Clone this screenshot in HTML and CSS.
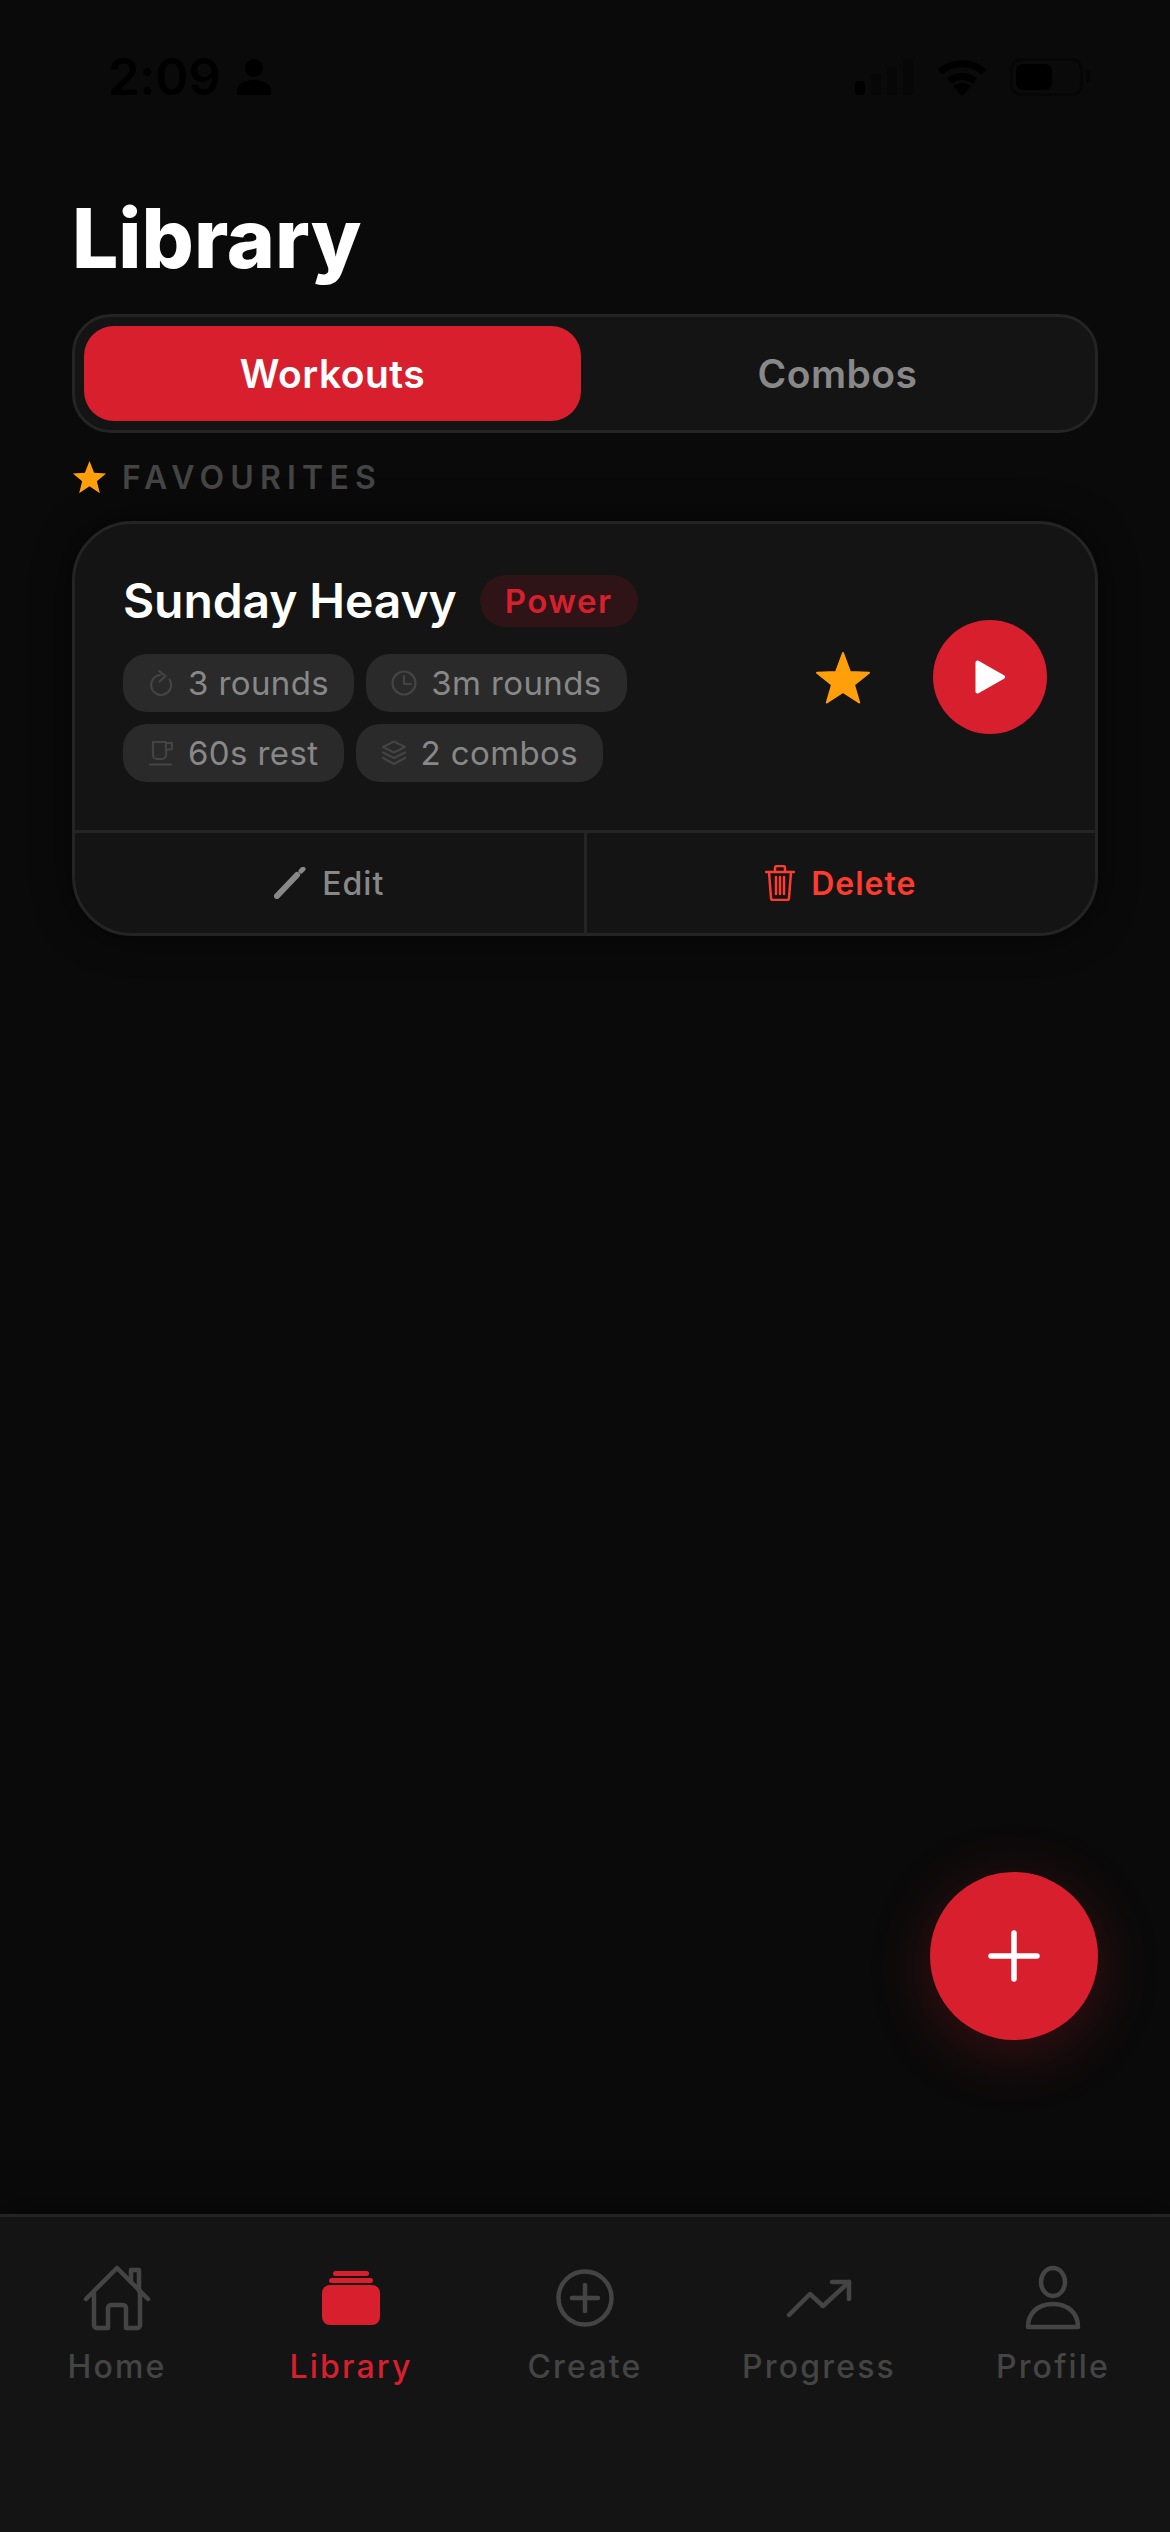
FILE: index.html
```html
<!DOCTYPE html>
<html lang="en">
<head>
  <meta charset="UTF-8" />
  <meta name="viewport" content="width=device-width, initial-scale=1.0"/>
  <title>Library</title>
  <link rel="stylesheet" href="styles.css">
</head>
<body>
  <div class="screen">
    <div class="status">
      <div class="status-left">
        <span class="time">2:09</span>
        <svg class="person" viewBox="0 0 34 36"><circle cx="17" cy="9" r="9"/><path d="M0 36v-5c0-6 8-10 17-10s17 4 17 10v5z"/></svg>
      </div>
      <div class="status-right">
        <svg class="signal" viewBox="0 0 60 36">
          <rect x="0" y="22" width="10" height="14" rx="3"/>
          <rect class="dim" x="16" y="15" width="10" height="21" rx="3"/>
          <rect class="dim" x="32" y="8" width="10" height="28" rx="3"/>
          <rect class="dim" x="48" y="0" width="10" height="36" rx="3"/>
        </svg>
        <svg class="wifi" viewBox="0 0 50 37">
          <path d="M3 13C15 2 35 2 47 13"/>
          <path d="M12 22c8-6 18-6 26 0"/>
          <path class="wifi-dot" d="M25 37l-9-10c5-4 13-4 18 0z"/>
        </svg>
        <div class="battery"><div class="battery-fill"></div></div>
      </div>
    </div>

    <main class="content">
      <h1 class="page-title">Library</h1>

      <div class="segment">
        <div class="segment-btn active">Workouts</div>
        <div class="segment-btn">Combos</div>
      </div>

      <div class="section-label">
        <svg class="label-star" viewBox="1 2 32 30"><path d="M17 2l4.200 10.600 11 .7-8.500 7.100 2.800 10.900L17 25l-9.500 6.300 2.800-10.900-8.500-7.100 11-.7z"/></svg>
        <span>FAVOURITES</span>
      </div>

      <section class="card">
        <div class="card-body">
          <div class="card-info">
            <div class="card-head">
              <span class="card-title">Sunday Heavy</span>
              <span class="tag">Power</span>
            </div>
            <div class="chips">
              <div class="chip">
                <svg class="chip-icon" viewBox="0 0 24 26"><path d="M11 5A10 10 0 1 0 20.500 9.500"/><path d="M10 1l6.500 5-6 5.500"/></svg>
                <span>3 rounds</span>
              </div>
              <div class="chip">
                <svg class="chip-icon" viewBox="0 0 26 26"><circle cx="13" cy="13" r="11.500"/><path d="M13 6v8h7"/></svg>
                <span>3m rounds</span>
              </div>
              <div class="chip">
                <svg class="chip-icon" viewBox="0 0 24 26"><path d="M4 2h13v13a4 4 0 0 1-4 4H8a4 4 0 0 1-4-4z"/><path d="M17 3h6v6l-6 1"/><path d="M1 24.500h21"/></svg>
                <span>60s rest</span>
              </div>
              <div class="chip">
                <svg class="chip-icon" viewBox="0 0 26 26"><path d="M13 1.500L24 7l-11 5.500L2 7z"/><path d="M2 12.500L13 18l11-5.500"/><path d="M2 18l11 6 11-6"/></svg>
                <span>2 combos</span>
              </div>
            </div>
          </div>
          <svg class="fav-star" viewBox="0 0 58 54"><path d="M29 3l7 19 19 .8-15 12 5.200 17.700L29 42l-16.200 10.500L18 34.800l-15-12 19-.8z"/></svg>
          <div class="play-btn">
            <svg viewBox="0 0 30 34"><path d="M2.500 2.500L28 17 2.500 31.500z"/></svg>
          </div>
        </div>
        <div class="card-actions">
          <div class="action edit">
            <svg class="pencil" viewBox="0 0 32 32"><path class="pencil-shaft" d="M3 29L23 8"/><path class="pencil-tip" d="M27 4l2-2"/></svg>
            <span>Edit</span>
          </div>
          <div class="action delete">
            <svg class="trash" viewBox="0 0 30 36"><path d="M1 7h28"/><path d="M10 6V3a2 2 0 0 1 2-2h6a2 2 0 0 1 2 2v3"/><path d="M4 7l2 26a2 2 0 0 0 2 2h14a2 2 0 0 0 2-2l2-26"/><path d="M11 12v17M15 12v17M19 12v17"/></svg>
            <span>Delete</span>
          </div>
        </div>
      </section>
    </main>

    <div class="fab">
      <svg viewBox="0 0 52 52"><path d="M26 3v46M3 26h46"/></svg>
    </div>

    <nav class="tabbar">
      <div class="tab">
        <div class="tab-icon">
          <svg class="stroke-icon" width="68" height="66" viewBox="0 0 68 66">
            <path d="M3 34L34 3l31 31"/>
            <path d="M48 17V5h8v21"/>
            <path d="M11 28v32a3 3 0 0 0 3 3h11V43a3 3 0 0 1 3-3h12a3 3 0 0 1 3 3v20h11a3 3 0 0 0 3-3V28"/>
          </svg>
        </div>
        <span>Home</span>
      </div>
      <div class="tab active">
        <div class="tab-icon">
          <svg class="fill-icon" width="60" height="54" viewBox="0 0 60 54">
            <rect x="12" y="0" width="36" height="5" rx="2.500"/>
            <rect x="8" y="7" width="44" height="5" rx="2.500"/>
            <rect x="1" y="14" width="58" height="40" rx="8"/>
          </svg>
        </div>
        <span>Library</span>
      </div>
      <div class="tab">
        <div class="tab-icon">
          <svg class="stroke-icon" width="60" height="60" viewBox="0 0 60 60">
            <circle cx="30" cy="30" r="26.500"/>
            <path d="M30 17v26M17 30h26"/>
          </svg>
        </div>
        <span>Create</span>
      </div>
      <div class="tab">
        <div class="tab-icon">
          <svg class="stroke-icon" width="66" height="40" viewBox="0 0 66 40">
            <path d="M3 37l21-21 13 12L63 4"/>
            <path d="M46 4h17v17"/>
          </svg>
        </div>
        <span>Progress</span>
      </div>
      <div class="tab">
        <div class="tab-icon">
          <svg class="stroke-icon" width="60" height="66" viewBox="0 0 60 66">
            <ellipse cx="30" cy="17" rx="12" ry="14"/>
            <path d="M5 62c0-14 10-23 25-23s25 9 25 23z"/>
          </svg>
        </div>
        <span>Profile</span>
      </div>
    </nav>
  </div>
</body>
</html>
```
FILE: styles.css
```css
* {
  box-sizing: border-box;
}

body {
  margin: 0;
  background: #0a0a0a;
  font-family: 'Inter', 'Liberation Sans', sans-serif;
}

.screen {
  position: relative;
  display: flex;
  flex-direction: column;
  width: 1170px;
  height: 2532px;
  overflow: hidden;
}

/* status bar, black on almost black */
.status {
  display: flex;
  justify-content: space-between;
  align-items: center;
  height: 96px;
  padding: 58px 87px 0 108px;
  flex-shrink: 0;
}

.status-left,
.status-right {
  display: flex;
  align-items: center;
}

.time {
  font-size: 51px;
  font-weight: 600;
  line-height: 38px;
  letter-spacing: -0.500px;
  color: #000;
}

.person {
  width: 34px;
  height: 36px;
  margin-left: 17px;
  fill: #000;
}

.signal {
  width: 60px;
  height: 36px;
  fill: #000;
}

.signal .dim {
  fill: #070707;
}

.wifi {
  width: 50px;
  height: 37px;
  margin-left: 22px;
  fill: none;
  stroke: #000;
  stroke-width: 7px;
}

.wifi .wifi-dot {
  fill: #000;
  stroke: none;
}

.battery {
  position: relative;
  width: 73px;
  height: 38px;
  margin-left: 23px;
  padding: 3px;
  border: 3px solid #060606;
  border-radius: 11px;
}

/* battery terminal */
.battery::after {
  content: "";
  position: absolute;
  top: 8px;
  right: -10px;
  width: 4px;
  height: 14px;
  background: #060606;
  border-radius: 0 4px 4px 0;
}

.battery-fill {
  width: 36px;
  height: 100%;
  background: #000;
  border-radius: 7px;
}

.content {
  padding: 0 72px;
}

.page-title {
  margin: 93px 0 25px;
  font-size: 82px;
  font-weight: 800;
  line-height: 100px;
  color: #fff;
}

.segment {
  display: flex;
  gap: 8px;
  height: 119px;
  padding: 9px;
  background: #141414;
  border: 3px solid #242424;
  border-radius: 39px;
}

.segment-btn {
  flex: 1;
  display: flex;
  align-items: center;
  justify-content: center;
  font-size: 39px;
  font-weight: 600;
  letter-spacing: 0.500px;
  color: #888;
  border-radius: 30px;
}

.segment-btn.active {
  background: #d81f2e;
  color: #fff;
}

.section-label {
  display: flex;
  align-items: center;
  gap: 15px;
  height: 36px;
  margin: 26px 0 26px;
  font-size: 32px;
  font-weight: 600;
  letter-spacing: 6.200px;
  color: #444;
}

.label-star {
  width: 35px;
  height: 33px;
  fill: #ff9f0a;
}

.card {
  display: flex;
  flex-direction: column;
  height: 415px;
  background: #141414;
  border: 3px solid #242424;
  border-radius: 60px;
  box-shadow: 0 0 36px rgba(0, 0, 0, 0.6);
}

.card-body {
  display: flex;
  align-items: center;
  height: 309px;
  padding: 0 48px;
  border-bottom: 3px solid #242424;
}

.card-info {
  flex: 1;
  padding-top: 3px;
}

.card-head {
  display: flex;
  align-items: center;
  gap: 23px;
  margin-bottom: 27px;
}

.card-title {
  font-size: 48px;
  font-weight: 600;
  line-height: 52px;
  letter-spacing: -0.100px;
  color: #fff;
}

.tag {
  height: 52px;
  padding: 0 25px;
  font-size: 33px;
  font-weight: 600;
  line-height: 52px;
  letter-spacing: 1.500px;
  color: #d81f2e;
  background: #2e1417;
  border-radius: 26px;
}

.chips {
  display: flex;
  flex-wrap: wrap;
  gap: 12px;
  width: 650px;
}

.chip {
  display: flex;
  align-items: center;
  gap: 14px;
  height: 58px;
  padding: 0 25px;
  font-size: 33px;
  letter-spacing: 0.400px;
  color: #888;
  background: #2a2a2a;
  border-radius: 24px;
}

.chip-icon {
  width: 26px;
  height: 26px;
  fill: none;
  stroke: #444;
  stroke-width: 2.200px;
  stroke-linecap: round;
  stroke-linejoin: round;
}

.fav-star {
  width: 58px;
  height: 54px;
  margin-right: 61px;
  fill: #ff9f0a;
  stroke: #ff9f0a;
  stroke-width: 2px;
  stroke-linejoin: round;
}

.play-btn {
  display: flex;
  align-items: center;
  justify-content: center;
  width: 114px;
  height: 114px;
  background: #d81f2e;
  border-radius: 50%;
}

.play-btn svg {
  width: 30px;
  height: 34px;
  fill: #fff;
  stroke: #fff;
  stroke-width: 4px;
  stroke-linejoin: round;
}

.card-actions {
  flex: 1;
  display: flex;
}

.action {
  flex: 1;
  display: flex;
  align-items: center;
  justify-content: center;
  gap: 16px;
  font-size: 32px;
  letter-spacing: 1px;
}

.action.edit {
  font-weight: 500;
  color: #888;
  border-right: 3px solid #242424;
}

.action.delete {
  font-weight: 600;
  color: #ff3b30;
}

.pencil {
  width: 32px;
  height: 32px;
  fill: none;
  stroke: #888;
  stroke-linecap: round;
}

.pencil-shaft {
  stroke-width: 6px;
}

.pencil-tip {
  stroke-width: 5px;
}

.trash {
  width: 30px;
  height: 36px;
  fill: none;
  stroke: #ff3b30;
  stroke-width: 2.500px;
  stroke-linecap: round;
  stroke-linejoin: round;
}

.fab {
  position: absolute;
  right: 72px;
  bottom: 492px;
  display: flex;
  align-items: center;
  justify-content: center;
  width: 168px;
  height: 168px;
  background: #d81f2e;
  border-radius: 50%;
  box-shadow: 0 12px 60px rgba(216, 31, 46, 0.25);
}

.fab svg {
  width: 52px;
  height: 52px;
  fill: none;
  stroke: #fff;
  stroke-width: 5.500px;
  stroke-linecap: round;
}

.tabbar {
  display: flex;
  margin-top: auto;
  height: 318px;
  padding-top: 48px;
  background: #141414;
  border-top: 3px solid #242424;
  box-shadow: 0 0 36px rgba(0, 0, 0, 0.6);
}

.tab {
  flex: 1;
  display: flex;
  flex-direction: column;
  align-items: center;
  font-size: 32px;
  font-weight: 500;
  line-height: 40px;
  letter-spacing: 2.200px;
  color: #444;
}

.tab.active {
  color: #d81f2e;
}

.tab-icon {
  display: flex;
  align-items: center;
  justify-content: center;
  height: 66px;
  margin-bottom: 16px;
}

.stroke-icon {
  fill: none;
  stroke: #444;
  stroke-width: 4.500px;
  stroke-linecap: round;
  stroke-linejoin: round;
}

.fill-icon {
  fill: #d81f2e;
}
```
